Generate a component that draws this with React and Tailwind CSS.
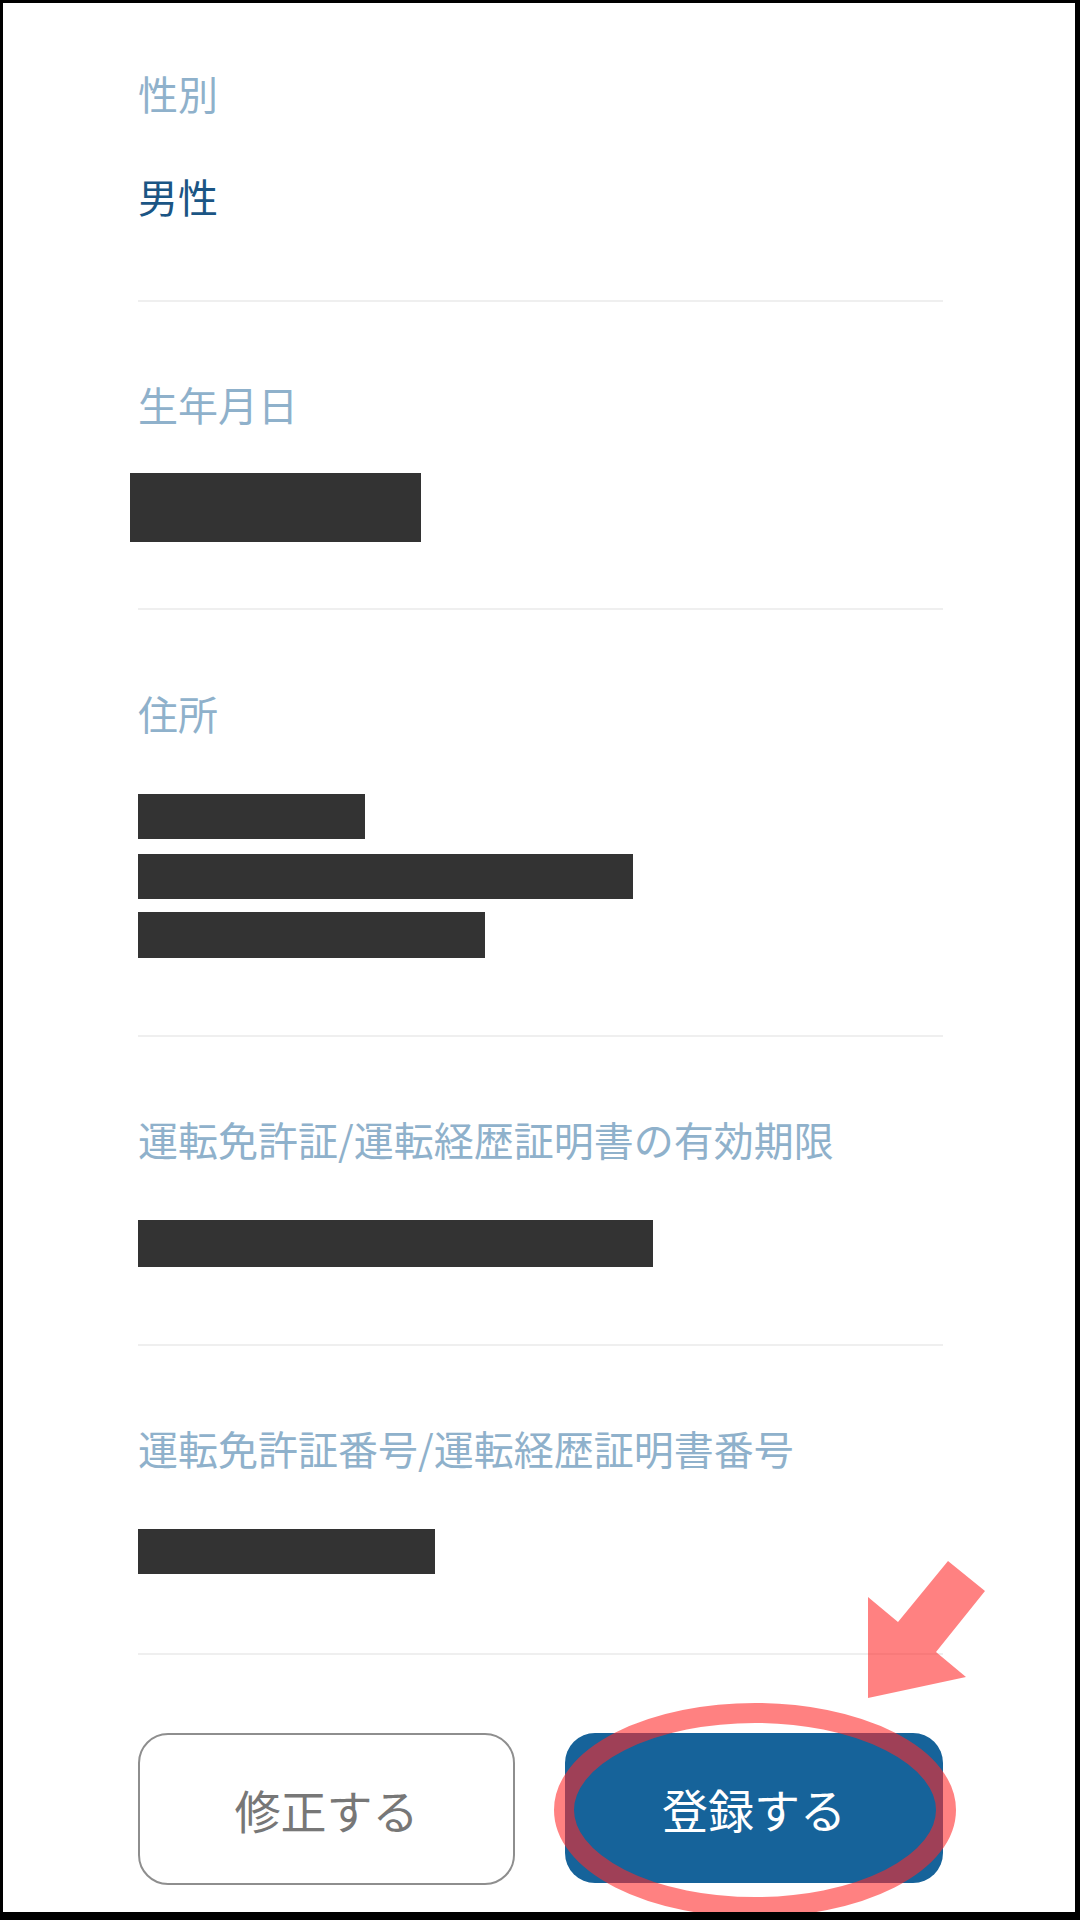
import React from 'react';

const FONT = { fontFamily: '"Noto Sans CJK JP", "Noto Sans", sans-serif' };

function Label({ children }) {
  return <p className="text-[40px] leading-[56px] text-[#8fb1cb] whitespace-nowrap">{children}</p>;
}

function Redacted({ className }) {
  return <div className={`bg-[#333333] ${className}`} />;
}

function Divider() {
  return <div className="h-[2px] bg-[#efefef]" />;
}

export default function App() {
  return (
    <div
      className="relative w-[1080px] h-[1920px] bg-white border-black border-t-[3px] border-l-[3px] border-r-[5px] border-b-[8px] overflow-hidden"
      style={FONT}
    >
      <div className="ml-[135px] w-[805px] flex flex-col">
        {/* 性別 */}
        <div className="pt-[62px] pb-[74px]">
          <Label>性別</Label>
          <p className="mt-[46px] text-[40px] leading-[59px] text-[#1b5584]">男性</p>
        </div>
        <Divider />

        {/* 生年月日 */}
        <div className="pt-[74px] pb-[66px]">
          <Label>生年月日</Label>
          <Redacted className="mt-[41px] -ml-[8px] w-[291px] h-[69px]" />
        </div>
        <Divider />

        {/* 住所 */}
        <div className="pt-[75px] pb-[77px]">
          <Label>住所</Label>
          <Redacted className="mt-[53px] w-[227px] h-[45px]" />
          <Redacted className="mt-[15px] w-[495px] h-[45px]" />
          <Redacted className="mt-[13px] w-[347px] h-[46px]" />
        </div>
        <Divider />

        <div className="pt-[74px] pb-[77px]">
          <Label>運転免許証/運転経歴証明書の有効期限</Label>
          <Redacted className="mt-[53px] w-[515px] h-[47px]" />
        </div>
        <Divider />

        <div className="pt-[74px] pb-[79px]">
          <Label>運転免許証番号/運転経歴証明書番号</Label>
          <Redacted className="mt-[53px] w-[297px] h-[45px]" />
        </div>
        <Divider />

        <div className="mt-[78px] flex gap-[50px]">
          <button className="w-[377px] h-[152px] rounded-[30px] border-2 border-[#8e8e8e] bg-white text-[46px] text-[#777777] flex items-center justify-center">
            修正する
          </button>
          <button className="w-[378px] h-[150px] rounded-[30px] bg-[#16639a] text-[46px] text-white flex items-center justify-center">
            登録する
          </button>
        </div>
      </div>

      {/* annotation overlay */}
      <svg className="absolute -left-[3px] -top-[3px] pointer-events-none" width="1080" height="1920" viewBox="0 0 1080 1920">
        <ellipse cx="755" cy="1810" rx="191" ry="97" fill="none" stroke="rgba(255,40,40,0.59)" strokeWidth="20" />
        <polygon
          points="948,1561 985,1591 936,1652 966,1677 868,1698 868,1597 898,1622"
          fill="rgba(255,40,40,0.59)"
        />
      </svg>
    </div>
  );
}
